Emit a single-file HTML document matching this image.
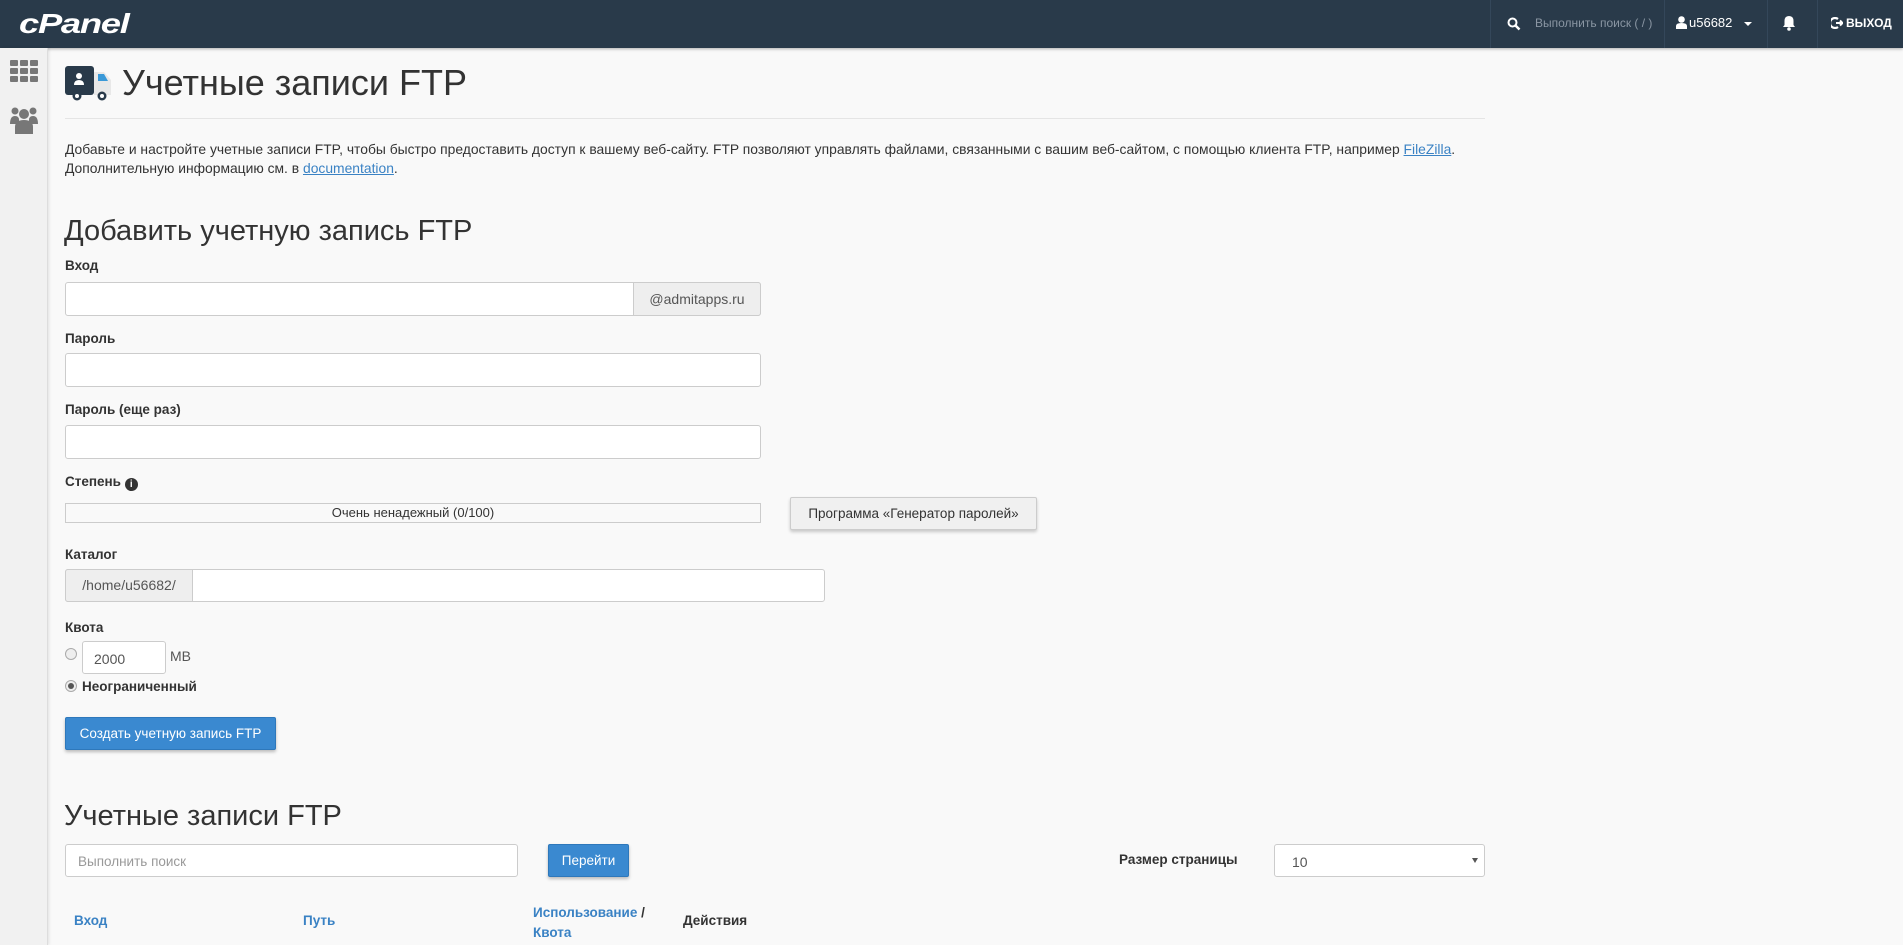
<!DOCTYPE html>
<html><head><meta charset="utf-8"><style>
*{box-sizing:border-box;margin:0;padding:0}
body{width:1903px;height:945px;overflow:hidden;background:#f9f9f9;font-family:"Liberation Sans",sans-serif;color:#333;position:relative;font-size:14px}
.a{position:absolute;white-space:nowrap}
#top{position:absolute;left:0;top:0;width:1903px;height:48px;background:#293a4a;box-shadow:0 1px 3px rgba(0,0,0,.3)}
#side{position:absolute;left:0;top:48px;width:48px;height:897px;background:#f1f1f1;border-right:1px solid #ddd;box-shadow:1px 0 3px rgba(0,0,0,.1)}
.sep{position:absolute;top:0;width:1px;height:48px;background:#34475a}
.inp{position:absolute;background:#fff;border:1px solid #ccc;border-radius:3px}
.lbl{position:absolute;font-weight:bold;font-size:13.5px;color:#333}
.lnk{color:#3a82c4;text-decoration:underline}
</style></head><body>
<div id="top">
<div class="a" style="left:19px;top:8px;font-size:28px;font-weight:bold;font-style:italic;color:#fff;letter-spacing:-1px;transform-origin:0 0;transform:scaleX(1.3)">cPanel</div>
<div class="sep" style="left:1490px"></div>
<svg class="a" style="left:1507px;top:17px" width="14" height="14" viewBox="0 0 14 14"><circle cx="5.5" cy="5.5" r="4" fill="none" stroke="#fff" stroke-width="2"/><path d="M8.5 8.5L12.5 12.5" stroke="#fff" stroke-width="2.5"/></svg>
<div class="a" style="left:1535px;top:16px;font-size:12px;color:#8a96a3">Выполнить поиск ( / )</div>
<div class="sep" style="left:1664px"></div>
<svg class="a" style="left:1676px;top:16px" width="11" height="13" viewBox="0 0 11 13"><circle cx="5.5" cy="3.5" r="3.3" fill="#fff"/><path d="M0 13V10Q0 7 5.5 7Q11 7 11 10V13Z" fill="#fff"/></svg>
<div class="a" style="left:1689px;top:15px;font-size:13px;color:#fff">u56682</div>
<div class="a" style="left:1744px;top:22px;width:0;height:0;border-left:4px solid transparent;border-right:4px solid transparent;border-top:4px solid #fff"></div>
<div class="sep" style="left:1767px"></div>
<svg class="a" style="left:1782px;top:15px" width="14" height="16" viewBox="0 0 14 16"><path d="M7 1Q2.5 1 2.5 6V10L1 12H13L11.5 10V6Q11.5 1 7 1Z" fill="#fff"/><circle cx="7" cy="14" r="1.8" fill="#fff"/></svg>
<div class="sep" style="left:1817px"></div>
<svg class="a" style="left:1831px;top:17px" width="12" height="12" viewBox="0 0 12 12"><path d="M7 2A5 5 0 1 0 7 10" fill="none" stroke="#fff" stroke-width="2.2"/><path d="M5 6H11M9 3.5L11.5 6L9 8.5" fill="none" stroke="#fff" stroke-width="2"/></svg>
<div class="a" style="left:1846px;top:16px;font-size:12px;color:#fff;font-weight:bold">ВЫХОД</div>
</div>
<div id="side">
<svg class="a" style="left:10px;top:12px" width="28" height="22" viewBox="0 0 28 22"><g fill="#777"><rect x="0" y="0" width="8" height="6" rx="1"/><rect x="10" y="0" width="8" height="6" rx="1"/><rect x="20" y="0" width="8" height="6" rx="1"/><rect x="0" y="8" width="8" height="6" rx="1"/><rect x="10" y="8" width="8" height="6" rx="1"/><rect x="20" y="8" width="8" height="6" rx="1"/><rect x="0" y="16" width="8" height="6" rx="1"/><rect x="10" y="16" width="8" height="6" rx="1"/><rect x="20" y="16" width="8" height="6" rx="1"/></g></svg>
<svg class="a" style="left:10px;top:58px" width="28" height="28" viewBox="0 0 28 28"><g fill="#777"><circle cx="5" cy="5" r="3.5"/><circle cx="23" cy="5" r="3.5"/><path d="M0 18Q0 10 5 10Q9 10 9 14V18Z"/><path d="M28 18Q28 10 23 10Q19 10 19 14V18Z"/><circle cx="14" cy="8" r="5"/><path d="M5 28V21Q5 14 14 14Q23 14 23 21V28Z"/></g></svg>
</div>
<svg class="a" style="left:65px;top:66px" width="47" height="36" viewBox="0 0 47 36"><rect x="0" y="0" width="29" height="29" rx="3" fill="#293a4a"/><path d="M29 6H39L46 14V29H29Z" fill="#e8e8e8"/><path d="M33 8H39L43 15H33Z" fill="#3a99d8"/><circle cx="14" cy="10" r="3" fill="#fff"/><path d="M9 19Q9 14 14 14Q19 14 19 19Z" fill="#fff"/><circle cx="12" cy="30" r="4.5" fill="#293a4a"/><circle cx="12" cy="30" r="2" fill="#fff"/><circle cx="37" cy="30" r="4.5" fill="#293a4a"/><circle cx="37" cy="30" r="2" fill="#fff"/></svg>
<div class="a" style="left:122px;top:62px;font-size:36px;color:#333">Учетные записи FTP</div>
<div class="a" style="left:65px;top:118px;width:1420px;height:1px;background:#e5e5e5"></div>
<div class="a" style="left:65px;top:140px;font-size:14px;line-height:19px;transform-origin:0 0;transform:scaleX(0.99)">Добавьте и настройте учетные записи FTP, чтобы быстро предоставить доступ к вашему веб-сайту. FTP позволяют управлять файлами, связанными с вашим веб-сайтом, с помощью клиента FTP, например <span class="lnk">FileZilla</span>.<br>Дополнительную информацию см. в <span class="lnk">documentation</span>.</div>
<div class="a" style="left:64px;top:215px;font-size:29px;color:#333">Добавить учетную запись FTP</div>
<div class="lbl" style="left:65px;top:258px">Вход</div>
<div class="inp" style="left:65px;top:282px;width:696px;height:34px"></div>
<div class="a" style="left:633px;top:282px;width:128px;height:34px;background:#eee;border:1px solid #ccc;border-radius:0 3px 3px 0;text-align:center;line-height:32px;color:#555;font-size:14px">@admitapps.ru</div>
<div class="lbl" style="left:65px;top:331px">Пароль</div>
<div class="inp" style="left:65px;top:353px;width:696px;height:34px"></div>
<div class="lbl" style="left:65px;top:402px">Пароль (еще раз)</div>
<div class="inp" style="left:65px;top:425px;width:696px;height:34px"></div>
<div class="lbl" style="left:65px;top:474px">Степень <span style="display:inline-block;width:13px;height:13px;border-radius:50%;background:#333;color:#fff;font-size:10px;text-align:center;line-height:13px;vertical-align:-1px">i</span></div>
<div class="a" style="left:65px;top:503px;width:696px;height:20px;background:#f9f9f9;border:1px solid #ccc;text-align:center;font-size:13px;line-height:18px;color:#333">Очень ненадежный (0/100)</div>
<div class="a" style="left:790px;top:497px;width:247px;height:33px;background:#f0f0f0;border:1px solid #ccc;border-radius:2px;box-shadow:0 2px 3px rgba(0,0,0,.2);text-align:center;line-height:31px;font-size:13.5px;color:#333">Программа «Генератор паролей»</div>
<div class="lbl" style="left:65px;top:547px">Каталог</div>
<div class="inp" style="left:65px;top:569px;width:760px;height:33px"></div>
<div class="a" style="left:65px;top:569px;width:128px;height:33px;background:#eee;border:1px solid #ccc;border-radius:3px 0 0 3px;text-align:center;line-height:31px;color:#555">/home/u56682/</div>
<div class="lbl" style="left:65px;top:620px">Квота</div>
<div class="a" style="left:65px;top:648px;width:12px;height:12px;border-radius:50%;border:1px solid #aaa;background:#eee"></div>
<div class="inp" style="left:82px;top:641px;width:84px;height:33px;padding:9px 0 0 11px;color:#555">2000</div>
<div class="a" style="left:170px;top:648px;color:#555">MB</div>
<div class="a" style="left:65px;top:680px;width:12px;height:12px;border-radius:50%;border:1px solid #aaa;background:#eee"></div>
<div class="a" style="left:68px;top:683px;width:6px;height:6px;border-radius:50%;background:#555"></div>
<div class="lbl" style="left:82px;top:679px">Неограниченный</div>
<div class="a" style="left:65px;top:717px;width:211px;height:33px;background:#3a89d0;border:1px solid #2e78bb;border-radius:2px;box-shadow:0 2px 3px rgba(0,0,0,.25);color:#fff;text-align:center;line-height:31px;font-size:13.5px">Создать учетную запись FTP</div>
<div class="a" style="left:64px;top:800px;font-size:29px">Учетные записи FTP</div>
<div class="inp" style="left:65px;top:844px;width:453px;height:33px;padding:9px 0 0 12px;color:#999;font-size:13.5px">Выполнить поиск</div>
<div class="a" style="left:548px;top:844px;width:81px;height:33px;background:#3a89d0;border:1px solid #2e78bb;border-radius:2px;box-shadow:0 2px 3px rgba(0,0,0,.25);color:#fff;text-align:center;line-height:31px;font-size:13.5px">Перейти</div>
<div class="lbl" style="left:1119px;top:852px">Размер страницы</div>
<div class="inp" style="left:1274px;top:844px;width:211px;height:33px;padding:9px 0 0 17px;color:#555">10</div>
<div class="a" style="left:1472px;top:858px;width:0;height:0;border-left:3px solid transparent;border-right:3px solid transparent;border-top:5px solid #555"></div>
<div class="lbl" style="left:74px;top:913px;color:#3a82c4">Вход</div>
<div class="lbl" style="left:303px;top:913px;color:#3a82c4">Путь</div>
<div class="lbl" style="left:533px;top:903px;color:#3a82c4;line-height:20px">Использование <span style="color:#333">/</span><br>Квота</div>
<div class="lbl" style="left:683px;top:913px">Действия</div>
</body></html>
